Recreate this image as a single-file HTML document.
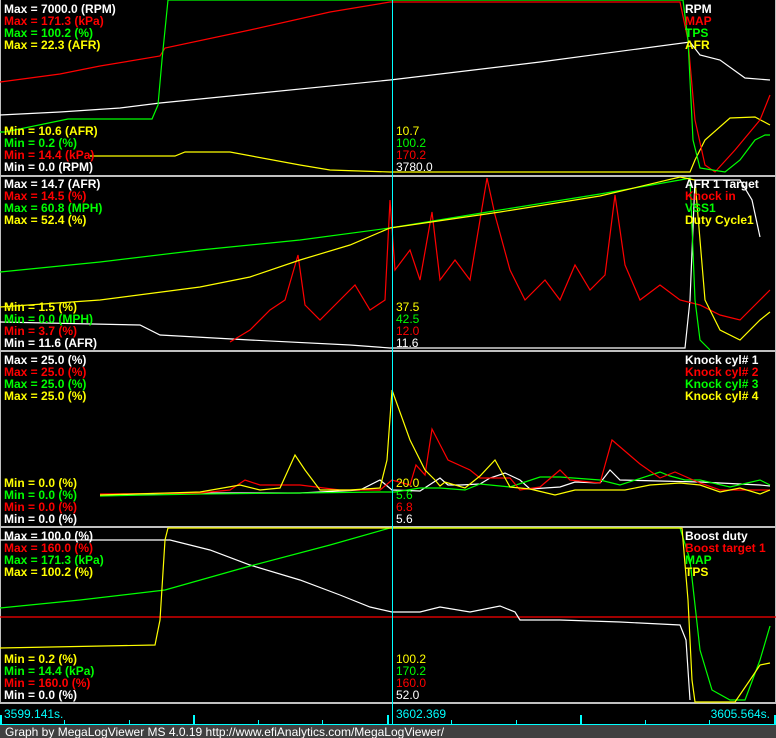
<!DOCTYPE html>
<html><head><meta charset="utf-8"><style>
html,body{margin:0;padding:0;background:#000;width:776px;height:738px;overflow:hidden}
svg{display:block}
.b{font-family:"Liberation Sans",sans-serif;font-weight:bold;font-size:12px}
.r{font-family:"Liberation Sans",sans-serif;font-size:12px}
polyline{fill:none;stroke-width:1.2}
</style></head><body>
<svg width="776" height="738" viewBox="0 0 776 738" xmlns="http://www.w3.org/2000/svg">
<rect width="776" height="738" fill="#000"/>
<rect x="0" y="175" width="776" height="2" fill="#c0c0c0"/>
<rect x="0" y="350" width="776" height="2" fill="#c0c0c0"/>
<rect x="0" y="526" width="776" height="2" fill="#c0c0c0"/>
<rect x="0" y="702" width="776" height="2" fill="#c0c0c0"/>
<rect x="0" y="0" width="1" height="702" fill="#c0c0c0"/>
<rect x="775" y="0" width="1" height="702" fill="#c0c0c0"/>

<polyline stroke="#ffff00" points="90,156 175,156 185,152 230,152 300,165 330,170 390,172 690,172 695,160 705,140 730,118 755,117 770,125"/>
<polyline stroke="#ffffff" points="0,115 60,112 120,108 160,103 250,94 390,80 540,62 690,42 700,55 720,60 745,78 770,80"/>
<polyline stroke="#ff0000" points="0,82 60,74 100,66 160,56 165,48 250,30 330,12 390,2 680,2 688,40 695,120 705,165 715,172 735,150 760,120 770,95"/>
<polyline stroke="#00ff00" points="0,132 5,132 68,119 152,119 158,105 162,60 168,0 683,0 688,40 693,140 700,168 725,172 740,160 755,140 765,135 770,135"/>

<polyline stroke="#ffffff" points="0,322 140,325 160,335 250,340 350,345 390,348 685,348 690,300 695,180 740,180 752,200 760,237"/>
<polyline stroke="#ff0000" points="230,342 250,330 270,310 285,300 298,255 305,305 320,320 340,300 355,285 370,310 385,300 390,200 395,270 410,250 420,280 432,212 440,280 455,260 470,280 487,178 495,215 510,270 525,300 545,280 560,300 575,265 590,290 605,275 615,195 625,265 640,300 660,285 680,300 700,305 720,315 740,320 760,300 770,290"/>
<polyline stroke="#00ff00" points="0,272 100,262 200,250 300,240 390,228 500,210 600,194 680,180 690,178 695,300 700,340 710,350"/>
<polyline stroke="#ffff00" points="0,307 100,300 200,287 250,277 300,260 350,245 390,228 500,212 600,196 680,177 695,180 705,300 720,330 740,340 760,320 770,312"/>

<polyline stroke="#ffffff" points="100,495 200,493 300,493 360,490 380,480 392,490 420,491 440,478 448,485 460,485 480,484 490,478 505,473 520,480 530,489 560,487 575,482 600,483 610,470 620,480 700,482 760,485 770,486"/>
<polyline stroke="#00ff00" points="100,496 200,494 300,493 380,492 395,492 420,488 440,488 465,490 480,484 510,487 540,477 560,477 600,480 620,485 660,472 670,476 685,480 700,480 730,487 760,480 770,485"/>
<polyline stroke="#ff0000" points="100,494 200,493 230,490 245,480 260,485 300,485 340,490 380,490 392,480 410,485 416,465 425,475 432,429 448,460 470,470 480,478 510,478 520,490 540,487 560,470 570,480 600,483 612,440 640,464 660,478 675,472 700,483 720,490 770,490"/>
<polyline stroke="#ffff00" points="100,495 200,492 240,485 260,490 280,488 295,455 305,470 320,490 350,490 380,488 387,460 392,390 410,440 425,470 435,480 440,486 445,482 465,488 480,476 495,460 510,487 530,489 555,495 575,490 600,490 625,490 650,485 680,483 700,485 720,492 740,488 760,494 770,490"/>

<polyline stroke="#ff0000" points="0,617 776,617"/>
<polyline stroke="#ffffff" points="0,540 170,540 210,550 250,565 300,580 340,595 370,607 392,612 420,612 440,607 470,612 500,606 515,612 520,620 560,620 620,622 680,625 686,640 690,700"/>
<polyline stroke="#00ff00" points="0,608 80,600 165,590 250,566 330,545 390,528 680,528 690,560 700,650 712,690 730,700 745,700 760,660 770,626"/>
<polyline stroke="#ffff00" points="0,648 155,645 160,620 165,540 168,528 682,528 688,600 692,680 695,702 735,702 750,680 760,665 770,663"/>

<rect x="392" y="0" width="1" height="725" fill="#00ffff"/>

<g class="b">
<text x="4" y="13" fill="#fff">Max = 7000.0 (RPM)</text>
<text x="4" y="25" fill="#f00">Max = 171.3 (kPa)</text>
<text x="4" y="37" fill="#0f0">Max = 100.2 (%)</text>
<text x="4" y="49" fill="#ff0">Max = 22.3 (AFR)</text>
<text x="4" y="135" fill="#ff0">Min = 10.6 (AFR)</text>
<text x="4" y="147" fill="#0f0">Min = 0.2 (%)</text>
<text x="4" y="159" fill="#f00">Min = 14.4 (kPa)</text>
<text x="4" y="171" fill="#fff">Min = 0.0 (RPM)</text>
<text x="685" y="13" fill="#fff">RPM</text>
<text x="685" y="25" fill="#f00">MAP</text>
<text x="685" y="37" fill="#0f0">TPS</text>
<text x="685" y="49" fill="#ff0">AFR</text>

<text x="4" y="188" fill="#fff">Max = 14.7 (AFR)</text>
<text x="4" y="200" fill="#f00">Max = 14.5 (%)</text>
<text x="4" y="212" fill="#0f0">Max = 60.8 (MPH)</text>
<text x="4" y="224" fill="#ff0">Max = 52.4 (%)</text>
<text x="4" y="311" fill="#ff0">Min = 1.5 (%)</text>
<text x="4" y="323" fill="#0f0">Min = 0.0 (MPH)</text>
<text x="4" y="335" fill="#f00">Min = 3.7 (%)</text>
<text x="4" y="347" fill="#fff">Min = 11.6 (AFR)</text>
<text x="685" y="188" fill="#fff">AFR 1 Target</text>
<text x="685" y="200" fill="#f00">Knock in</text>
<text x="685" y="212" fill="#0f0">VSS1</text>
<text x="685" y="224" fill="#ff0">Duty Cycle1</text>

<text x="4" y="364" fill="#fff">Max = 25.0 (%)</text>
<text x="4" y="376" fill="#f00">Max = 25.0 (%)</text>
<text x="4" y="388" fill="#0f0">Max = 25.0 (%)</text>
<text x="4" y="400" fill="#ff0">Max = 25.0 (%)</text>
<text x="4" y="487" fill="#ff0">Min = 0.0 (%)</text>
<text x="4" y="499" fill="#0f0">Min = 0.0 (%)</text>
<text x="4" y="511" fill="#f00">Min = 0.0 (%)</text>
<text x="4" y="523" fill="#fff">Min = 0.0 (%)</text>
<text x="685" y="364" fill="#fff">Knock cyl# 1</text>
<text x="685" y="376" fill="#f00">Knock cyl# 2</text>
<text x="685" y="388" fill="#0f0">Knock cyl# 3</text>
<text x="685" y="400" fill="#ff0">Knock cyl# 4</text>

<text x="4" y="540" fill="#fff">Max = 100.0 (%)</text>
<text x="4" y="552" fill="#f00">Max = 160.0 (%)</text>
<text x="4" y="564" fill="#0f0">Max = 171.3 (kPa)</text>
<text x="4" y="576" fill="#ff0">Max = 100.2 (%)</text>
<text x="4" y="663" fill="#ff0">Min = 0.2 (%)</text>
<text x="4" y="675" fill="#0f0">Min = 14.4 (kPa)</text>
<text x="4" y="687" fill="#f00">Min = 160.0 (%)</text>
<text x="4" y="699" fill="#fff">Min = 0.0 (%)</text>
<text x="685" y="540" fill="#fff">Boost duty</text>
<text x="685" y="552" fill="#f00">Boost target 1</text>
<text x="685" y="564" fill="#0f0">MAP</text>
<text x="685" y="576" fill="#ff0">TPS</text>
</g>

<g class="r">
<text x="396" y="135" fill="#ff0">10.7</text>
<text x="396" y="147" fill="#0f0">100.2</text>
<text x="396" y="159" fill="#f00">170.2</text>
<text x="396" y="171" fill="#fff">3780.0</text>
<text x="396" y="311" fill="#ff0">37.5</text>
<text x="396" y="323" fill="#0f0">42.5</text>
<text x="396" y="335" fill="#f00">12.0</text>
<text x="396" y="347" fill="#fff">11.6</text>
<text x="396" y="487" fill="#ff0">20.0</text>
<text x="396" y="499" fill="#0f0">5.6</text>
<text x="396" y="511" fill="#f00">6.8</text>
<text x="396" y="523" fill="#fff">5.6</text>
<text x="396" y="663" fill="#ff0">100.2</text>
<text x="396" y="675" fill="#0f0">170.2</text>
<text x="396" y="687" fill="#f00">160.0</text>
<text x="396" y="699" fill="#fff">52.0</text>
<text x="4" y="718" fill="#00ffff">3599.141s.</text>
<text x="396" y="718" fill="#00ffff">3602.369</text>
<text x="770" y="718" fill="#00ffff" text-anchor="end">3605.564s.</text>
</g>

<g fill="#00ffff">
<rect x="0" y="715" width="2" height="9"/>
<rect x="64" y="720" width="1" height="4"/>
<rect x="129" y="720" width="1" height="4"/>
<rect x="193" y="715" width="2" height="9"/>
<rect x="258" y="720" width="1" height="4"/>
<rect x="322" y="720" width="1" height="4"/>
<rect x="387" y="715" width="2" height="9"/>
<rect x="451" y="720" width="1" height="4"/>
<rect x="516" y="720" width="1" height="4"/>
<rect x="580" y="715" width="2" height="9"/>
<rect x="645" y="720" width="1" height="4"/>
<rect x="709" y="720" width="1" height="4"/>
<rect x="774" y="715" width="2" height="9"/>
<rect x="0" y="724" width="776" height="1"/>
</g>
<rect x="0" y="725" width="776" height="13" fill="#404040"/>
<text x="5" y="736" class="r" fill="#fff">Graph by MegaLogViewer MS 4.0.19 http://www.efiAnalytics.com/MegaLogViewer/</text>
</svg>
</body></html>
